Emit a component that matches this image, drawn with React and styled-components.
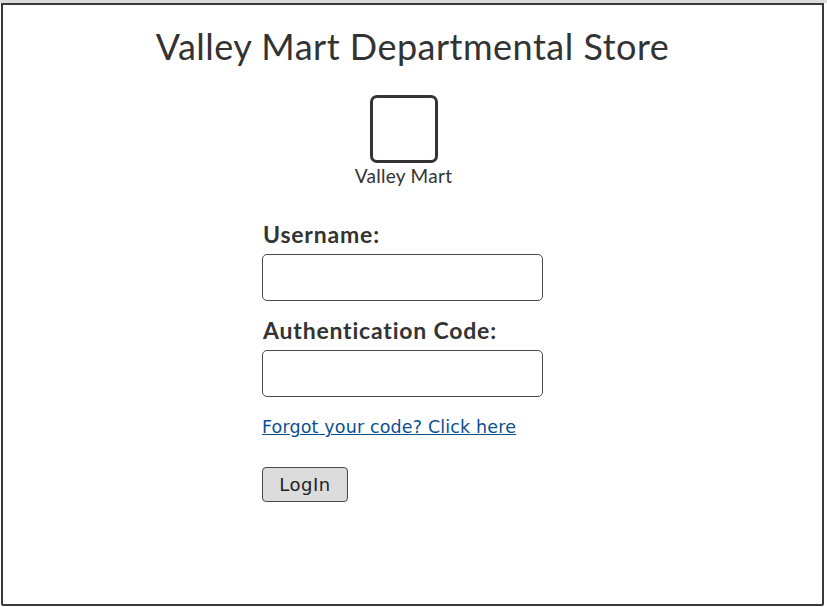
import React from "react";
import styled, { createGlobalStyle } from "styled-components";

const Global = createGlobalStyle`
  html, body { margin: 0; padding: 0; background: #fff; }
  body { width: 827px; height: 607px; overflow: hidden; }
`;

const Screen = styled.div`
  width: 827px;
  height: 607px;
  box-sizing: border-box;
  border-top: 3px solid #dcdcdc;
  padding-left: 1px;
`;

const Frame = styled.div`
  width: 823px;
  height: 603px;
  box-sizing: border-box;
  border: 2px solid #3a3a3a;
  border-radius: 0 0 2px 2px;
  display: flex;
  flex-direction: column;
  align-items: center;
  font-family: "Lato", "Noto Sans", sans-serif;
  color: #333;
`;

const Title = styled.h1`
  margin: 20px 0 0;
  font-size: 36px;
  font-weight: 400;
  line-height: 42px;
  letter-spacing: 0.5px;
`;

const Logo = styled.div`
  margin-top: 28px;
  margin-left: -18px;
  display: flex;
  flex-direction: column;
  align-items: center;
  gap: 2px;
`;

const LogoBox = styled.div`
  width: 68px;
  height: 68px;
  box-sizing: border-box;
  border: 3px solid #333;
  border-radius: 7px;
`;

const LogoText = styled.span`
  font-size: 19px;
  line-height: 22px;
  letter-spacing: 0.3px;
`;

const Form = styled.div`
  width: 281px;
  margin-top: 34px;
  margin-left: -20px;
  display: flex;
  flex-direction: column;
`;

const Label = styled.label`
  font-size: 23px;
  font-weight: 700;
  line-height: 26px;
  margin: 0 0 7px 1px;
  letter-spacing: 0.8px;
`;

const Input = styled.div`
  width: 281px;
  height: 47px;
  box-sizing: border-box;
  border: 1px solid #4a4a4a;
  border-radius: 5px;
  margin-bottom: ${(p) => p.$mb}px;
`;

const Link = styled.a`
  font-family: "DejaVu Sans", Verdana, sans-serif;
  font-size: 17.5px;
  color: #0b4f91;
  text-decoration: underline;
  line-height: 20px;
  align-self: flex-start;
  letter-spacing: 0.15px;
`;

const Button = styled.button`
  margin-top: 30px;
  width: 86px;
  height: 35px;
  box-sizing: border-box;
  background: #dcdcdc;
  border: 1px solid #4a4a4a;
  border-radius: 4px;
  font-family: "DejaVu Sans", Verdana, sans-serif;
  font-size: 18px;
  letter-spacing: 0.5px;
  color: #222;
  padding: 0;
  align-self: flex-start;
`;

export default function App() {
  return (
    <>
      <Global />
      <Screen>
        <Frame>
          <Title>Valley Mart Departmental Store</Title>
          <Logo>
            <LogoBox />
            <LogoText>Valley Mart</LogoText>
          </Logo>
          <Form>
            <Label>Username:</Label>
            <Input $mb={16} />
            <Label>Authentication Code:</Label>
            <Input $mb={20} />
            <Link href="#">Forgot your code? Click here</Link>
            <Button>LogIn</Button>
          </Form>
        </Frame>
      </Screen>
    </>
  );
}
